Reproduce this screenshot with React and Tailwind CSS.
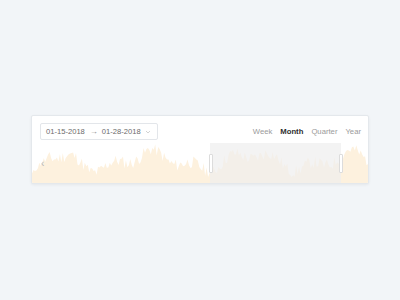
import React from "react";

function makeData(n, seed) {
  let s = seed;
  const rnd = () => {
    s = (s * 9301 + 49297) % 233280;
    return s / 233280;
  };
  const pts = [];
  for (let i = 0; i < n; i++) {
    let v =
      0.55 +
      0.18 * Math.sin(i / 11 + 0.5) +
      0.12 * Math.sin(i / 4.3 + 1.3) +
      (rnd() - 0.5) * 0.32;
    v = Math.max(0.15, Math.min(0.97, v));
    pts.push(v);
  }
  return pts;
}

const DATA = makeData(230, 11);

function Area() {
  const w = 336;
  const h = 40;
  const step = w / (DATA.length - 1);
  let d = `M0 ${h}`;
  DATA.forEach((v, i) => {
    const ramp = i < 12 ? 0.3 + (0.7 * i) / 12 : 1;
    const y = h - v * h * ramp;
    d += ` L${(i * step).toFixed(1)} ${y.toFixed(1)}`;
  });
  d += ` L${w} ${h} Z`;
  return (
    <svg width={w} height={h} viewBox={`0 0 ${w} ${h}`} className="block">
      <path d={d} fill="#fdf1de" />
    </svg>
  );
}

export default function App() {
  return (
    <div className="w-[400px] h-[300px] bg-[#f2f5f8] flex items-start justify-center pt-[115px] font-['Liberation_Sans',sans-serif]">
      <div className="w-[338px] h-[69px] bg-white border border-[#e4e8ec] rounded-[2px] shadow-[0_1px_3px_rgba(0,0,0,0.06)] relative overflow-hidden">
        <div className="flex items-center justify-between pl-[8px] pr-[7px] pt-[7px]">
          <div className="flex items-center h-[17px] w-[118px] border border-[#e3e6ea] rounded-[2px] text-[7.6px] text-[#6b6b6b] pl-[5px] pr-[6px]">
            <span>01-15-2018</span>
            <span className="ml-[5px] text-[#8a8a8a] text-[8px]">→</span>
            <span className="ml-[4px]">01-28-2018</span>
            <svg width="6" height="4" viewBox="0 0 6 4" className="ml-auto">
              <path d="M1 1 L3 3 L5 1" stroke="#c8c8c8" strokeWidth="0.8" fill="none" />
            </svg>
          </div>
          <div className="flex items-center gap-[8px] text-[7.7px] text-[#9a9a9a] pt-[1px]">
            <span>Week</span>
            <span className="text-[#2e2e2e] font-bold">Month</span>
            <span>Quarter</span>
            <span>Year</span>
          </div>
        </div>
        <div className="absolute left-0 bottom-0 w-full h-[40px]">
          <Area />
        </div>
        <div className="absolute left-[9px] top-[40px] text-[#b5b5b5] text-[10px]">‹</div>
        <div className="absolute left-[178px] top-[27px] w-[131px] h-[41px] bg-[rgba(238,238,238,0.7)]" />
        <div className="absolute left-[177px] top-[38px] w-[4px] h-[19px] bg-white border border-[#dcdcdc] rounded-[1px]" />
        <div className="absolute left-[307px] top-[38px] w-[4px] h-[19px] bg-white border border-[#dcdcdc] rounded-[1px]" />
      </div>
    </div>
  );
}
